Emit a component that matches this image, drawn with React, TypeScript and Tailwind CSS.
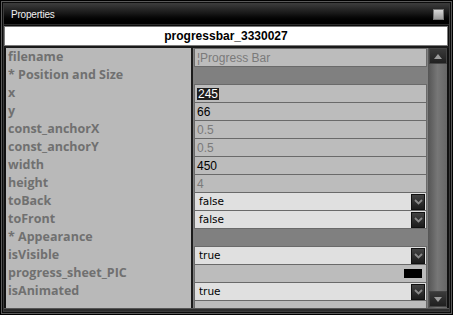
import React from "react";

type Row =
  | { label: string; kind: "text"; value: string; tone: "gray" | "black" | "sel" }
  | { label: string; kind: "section" }
  | { label: string; kind: "select"; value: string }
  | { label: string; kind: "swatch" };

const rows: Row[] = [
  { label: "filename", kind: "text", value: "¦Progress Bar", tone: "gray" },
  { label: "* Position and Size", kind: "section" },
  { label: "x", kind: "text", value: "245", tone: "sel" },
  { label: "y", kind: "text", value: "66", tone: "black" },
  { label: "const_anchorX", kind: "text", value: "0.5", tone: "gray" },
  { label: "const_anchorY", kind: "text", value: "0.5", tone: "gray" },
  { label: "width", kind: "text", value: "450", tone: "black" },
  { label: "height", kind: "text", value: "4", tone: "gray" },
  { label: "toBack", kind: "select", value: "false" },
  { label: "toFront", kind: "select", value: "false" },
  { label: "* Appearance", kind: "section" },
  { label: "isVisible", kind: "select", value: "true" },
  { label: "progress_sheet_PIC", kind: "swatch" },
  { label: "isAnimated", kind: "select", value: "true" },
];

function Chevron() {
  return (
    <div className="w-[14px] h-[16px] bg-gradient-to-b from-[#444] to-[#1c1c1c] border border-[#111] flex items-center justify-center">
      <svg width="9" height="6" viewBox="0 0 9 6">
        <path d="M1 1 L4.5 4.5 L8 1" fill="none" stroke="#8a8a8a" strokeWidth="1.8" />
      </svg>
    </div>
  );
}

function ValueCell({ row }: { row: Row }) {
  if (row.kind === "section") {
    return <div className="h-[17px] mt-px" />;
  }
  if (row.kind === "select") {
    return (
      <div className="h-[19px] -mb-px border border-[#6a6a6a] bg-[#e0e0e0] flex items-center justify-between pl-[4px] pr-px">
        <span className="text-black" style={{ fontFamily: '"DejaVu Sans", Verdana, sans-serif', fontSize: "10.5px" }}>
          {row.value}
        </span>
        <Chevron />
      </div>
    );
  }
  if (row.kind === "swatch") {
    return (
      <div className="h-[19px] -mb-px border border-[#6a6a6a] bg-[#bcbcbc] flex items-center justify-end pr-[4px]">
        <div className="w-[18px] h-[9px] bg-black" />
      </div>
    );
  }
  const color = row.tone === "gray" ? "text-[#7a7a7a]" : "text-black";
  return (
    <div className="h-[19px] -mb-px border border-[#6a6a6a] bg-[#bcbcbc] flex items-center pl-[2px]">
      {row.tone === "sel" ? (
        <span className="bg-[#1e1e1e] text-white px-px leading-[12px] text-[12px]">{row.value}</span>
      ) : (
        <span className={`${color} text-[12px] leading-[12px]`}>{row.value}</span>
      )}
    </div>
  );
}

export default function App() {
  return (
    <div className="w-[453px] h-[315px] bg-black p-px" style={{ fontFamily: '"Liberation Sans", Arial, sans-serif' }}>
      <div className="h-full border border-[#5a5a5a] bg-[#0c0c0c] p-px">
        <div className="h-full border border-[#3a3a3a] flex flex-col">
          {/* title bar */}
          <div className="h-[21px] shrink-0 bg-gradient-to-b from-[#3a3a3a] via-[#151515] to-black border-b border-[#2a2a2a] flex items-center justify-between pl-[7px] pr-[5px]">
            <span className="text-[10px] text-[#f0f0f0] tracking-[-0.2px]">Properties</span>
            <div className="w-[11px] h-[11px] border border-[#777] bg-gradient-to-b from-[#d8d8d8] to-[#9a9a9a]" />
          </div>
          {/* header */}
          <div className="h-[20px] shrink-0 mt-px mr-px border border-[#7a7a7a] bg-white flex items-center justify-center">
            <span className="text-[12px] font-bold text-black">progressbar_3330027</span>
          </div>
          {/* content */}
          <div className="flex-1 min-h-0 flex pt-[2px] bg-[#1a1a1a]">
            <div className="w-[2px] bg-[#111]" />
            <div className="w-[185px] bg-[#b9b9b9] flex flex-col pl-[2px]">
              {rows.map((r) => (
                <div
                  key={r.label}
                  className="h-[18px] flex items-center font-bold text-[#707070] leading-none whitespace-nowrap"
                  style={{ fontFamily: '"Open Sans", "Noto Sans", sans-serif', fontSize: "12.5px" }}
                >
                  {r.label}
                </div>
              ))}
            </div>
            <div className="w-[2px] bg-[#1c1c1c]" />
            <div className="w-[235px] bg-[#808080] px-px overflow-hidden">
              {rows.map((r) => (
                <ValueCell key={r.label} row={r} />
              ))}
              <div className="h-[19px] border border-[#6a6a6a] bg-[#bcbcbc]" />
            </div>
            <div className="w-[19px] bg-gradient-to-r from-[#555] via-[#777] to-[#666] flex flex-col justify-between pl-px pb-px">
              <div className="h-[16px] bg-gradient-to-b from-[#3a3a3a] to-[#202020] border border-[#444] flex items-center justify-center">
                <svg width="8" height="5" viewBox="0 0 8 5">
                  <path d="M0 5 L4 0 L8 5 Z" fill="#9a9a9a" />
                </svg>
              </div>
              <div className="h-[16px] bg-gradient-to-b from-[#3a3a3a] to-[#202020] border border-[#444] flex items-center justify-center">
                <svg width="8" height="5" viewBox="0 0 8 5">
                  <path d="M0 0 L4 5 L8 0 Z" fill="#9a9a9a" />
                </svg>
              </div>
            </div>
            <div className="w-[2px] bg-[#111]" />
          </div>
          <div className="h-[3px] shrink-0 bg-[#2c2c2c] border-t border-[#555]" />
        </div>
      </div>
    </div>
  );
}
